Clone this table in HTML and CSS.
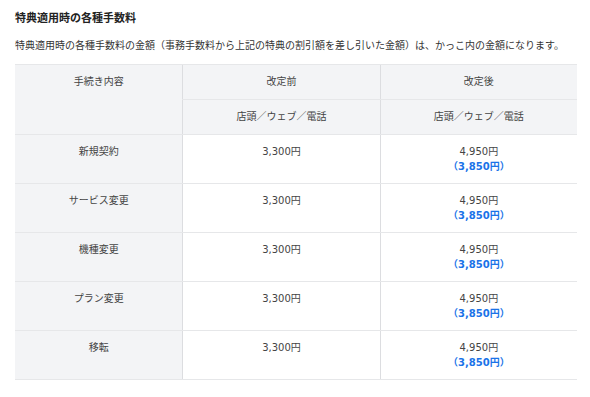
FILE: index.html
```html
<!DOCTYPE html>
<html lang="ja">
<head>
  <meta charset="UTF-8">
  <meta name="viewport" content="width=device-width, initial-scale=1.0">
  <title>特典適用時の各種手数料</title>
  <link rel="stylesheet" href="styles.css">
</head>
<body>
  <h2 class="title">特典適用時の各種手数料</h2>
  <p class="note">特典適用時の各種手数料の金額（事務手数料から上記の特典の割引額を差し引いた金額）は、かっこ内の金額になります。</p>

  <table class="fees">
    <thead>
      <tr>
        <th rowspan="2" class="col-name">手続き内容</th>
        <th class="col-price">改定前</th>
        <th class="col-price">改定後</th>
      </tr>
      <tr>
        <th>店頭／ウェブ／電話</th>
        <th>店頭／ウェブ／電話</th>
      </tr>
    </thead>
    <tbody>
      <tr>
        <th>新規契約</th>
        <td>3,300円</td>
        <td>4,950円<br><span class="discount">（3,850円）</span></td>
      </tr>
      <tr>
        <th>サービス変更</th>
        <td>3,300円</td>
        <td>4,950円<br><span class="discount">（3,850円）</span></td>
      </tr>
      <tr>
        <th>機種変更</th>
        <td>3,300円</td>
        <td>4,950円<br><span class="discount">（3,850円）</span></td>
      </tr>
      <tr>
        <th>プラン変更</th>
        <td>3,300円</td>
        <td>4,950円<br><span class="discount">（3,850円）</span></td>
      </tr>
      <tr>
        <th>移転</th>
        <td>3,300円</td>
        <td>4,950円<br><span class="discount">（3,850円）</span></td>
      </tr>
    </tbody>
  </table>
</body>
</html>
```

FILE: styles.css
```css
body {
  font-family: "DejaVu Sans", "Noto Sans CJK JP", sans-serif;
  color: #333;
  background-color: #fff;
  margin: 0;
  padding: 9px 13px 0 15px;
}
.title {
  font-family: "Noto Sans CJK JP", sans-serif;
  font-size: 11px;
  font-weight: bold;
  line-height: 16px;
  color: #222;
  margin: 0 0 12px;
}
.note {
  font-family: "Noto Sans CJK JP", sans-serif;
  font-size: 10px;
  white-space: nowrap;
  line-height: 16px;
  color: #333;
  margin: 0 0 11px;
}
.fees {
  width: 562px;
  border-collapse: collapse;
  font-size: 10px;
  line-height: 15px;
  color: #444;
}
.fees th,
.fees td {
  font-weight: normal;
  text-align: center;
  vertical-align: top;
  padding: 9px 6px 10px;
  border-top: 1px solid #e6e7e9;
  border-bottom: 1px solid #e6e7e9;
  border-left: 1px solid #dcdde0;
}
.fees tbody th,
.fees tbody td {
  padding-bottom: 9px;
}
.fees tr > :first-child {
  border-left: none;
}
.fees thead th {
  background-color: #f3f4f6;
}
.fees thead tr:last-child th {
  border-left: 1px solid #dcdde0;
}
.fees tbody th {
  background-color: #f3f4f6;
}
.fees tbody td {
  background-color: #fff;
}
.col-name {
  width: 155px;
}
.col-price {
  width: 184px;
}
.discount {
  color: #1a73e8;
  font-weight: bold;
}
```
